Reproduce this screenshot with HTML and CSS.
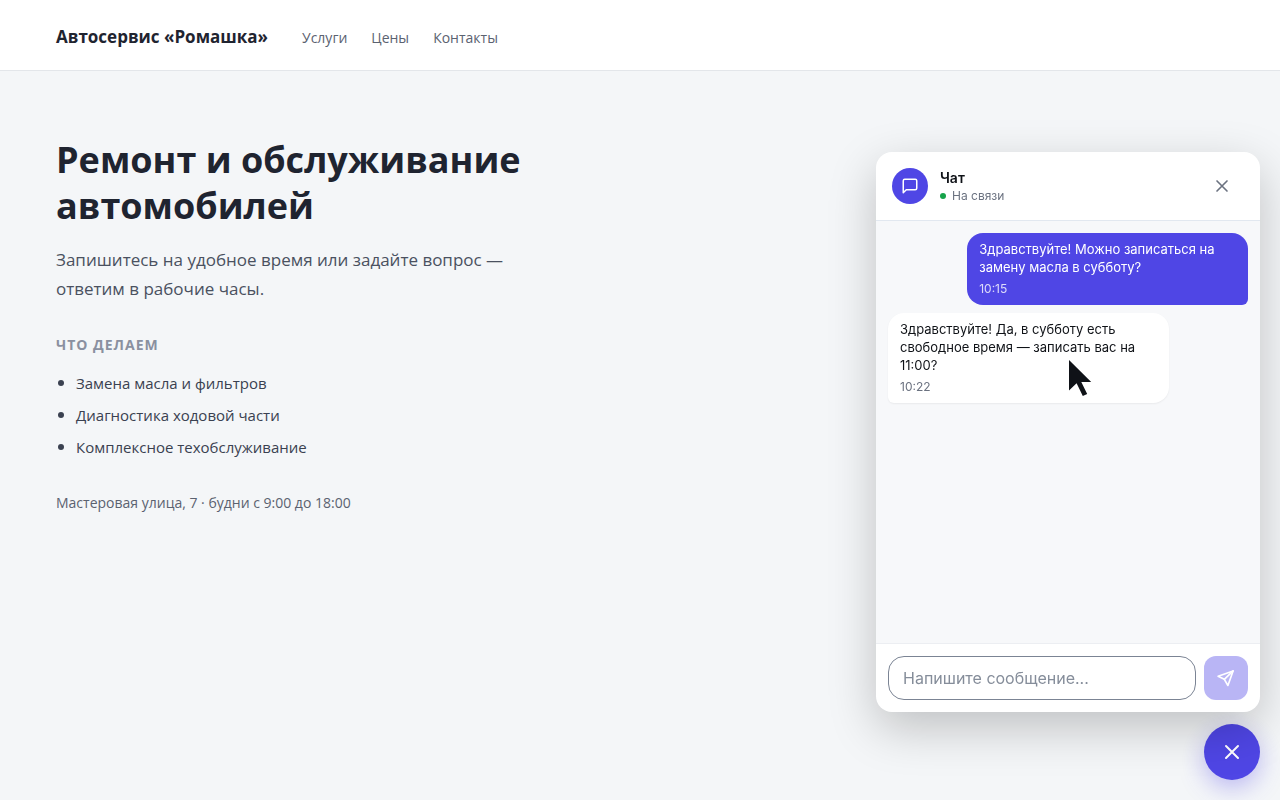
FILE: index.html
```html
<!DOCTYPE html>
<html lang="ru">
<head>
    <meta charset="UTF-8">
    <meta name="viewport" content="width=device-width, initial-scale=1.0">
    <title>Автосервис «Ромашка»</title>
    <link rel="stylesheet" href="styles.css">
</head>
<body>
    <header class="site-header">
        <div class="brand">Автосервис «Ромашка»</div>
        <nav class="site-nav">
            <a href="#services">Услуги</a>
            <a href="#prices">Цены</a>
            <a href="#contacts">Контакты</a>
        </nav>
    </header>

    <main class="content">
        <h1>Ремонт и обслуживание автомобилей</h1>
        <p class="lead">Запишитесь на удобное время или задайте вопрос — ответим в рабочие часы.</p>

        <h2 id="services">Что делаем</h2>
        <ul class="services">
            <li>Замена масла и фильтров</li>
            <li>Диагностика ходовой части</li>
            <li>Комплексное техобслуживание</li>
        </ul>

        <p class="address" id="contacts">Мастеровая улица, 7 · будни с 9:00 до 18:00</p>
    </main>

    <!-- Chat widget -->
    <div class="widget">
        <section class="chat" aria-label="Чат">
            <div class="chat-header">
                <div class="avatar">
                    <svg width="18" height="18" viewBox="0 0 24 24" fill="none" stroke="currentColor" stroke-width="2" stroke-linecap="round" stroke-linejoin="round"><path d="M21 15a2 2 0 0 1-2 2H7l-4 4V5a2 2 0 0 1 2-2h14a2 2 0 0 1 2 2z"/></svg>
                </div>
                <div class="chat-info">
                    <div class="chat-title">Чат</div>
                    <div class="chat-status">На связи</div>
                </div>
                <button type="button" class="chat-close" aria-label="Закрыть чат">
                    <svg width="20" height="20" viewBox="0 0 24 24" fill="none" stroke="currentColor" stroke-width="2" stroke-linecap="round"><path d="M18 6 6 18M6 6l12 12"/></svg>
                </button>
            </div>

            <div class="messages">
                <div class="message outgoing">
                    <p>Здравствуйте! Можно записаться на замену масла в субботу?</p>
                    <time>10:15</time>
                </div>
                <div class="message incoming">
                    <p>Здравствуйте! Да, в субботу есть свободное время — записать вас на 11:00?</p>
                    <time>10:22</time>
                </div>
            </div>

            <form class="composer">
                <input type="text" name="message" placeholder="Напишите сообщение..." aria-label="Сообщение">
                <button type="submit" class="send" aria-label="Отправить" disabled>
                    <svg width="20" height="20" viewBox="0 0 24 24" fill="none" stroke="currentColor" stroke-width="2" stroke-linecap="round" stroke-linejoin="round"><path d="M20.500 3.500 2.500 9.800l7.500 3.800 4.300 7.400z"/><path d="M20.500 3.500 10 13.600"/></svg>
                </button>
            </form>

            <svg class="cursor" width="23" height="38" viewBox="0 0 23 38" aria-hidden="true"><path fill="#0f1217" d="M0 0v30.500l7.600-7.200 6.200 12.800 4.400-2-5.900-12.100h9.900z"/></svg>
        </section>

        <button type="button" class="launcher" aria-label="Свернуть чат">
            <svg width="24" height="24" viewBox="0 0 24 24" fill="none" stroke="currentColor" stroke-width="2" stroke-linecap="round"><path d="M18 6 6 18M6 6l12 12"/></svg>
        </button>
    </div>
</body>
</html>
```
FILE: styles.css
```css
* {
    box-sizing: border-box;
}
body {
    margin: 0;
    font-family: "Open Sans", "Noto Sans", sans-serif;
    color: #1f2430;
    background: #f4f6f8;
}
h1, h2, p, ul {
    margin: 0;
}
button, input {
    font: inherit;
}
svg {
    display: block;
}

.site-header {
    display: flex;
    align-items: baseline;
    gap: 34px;
    padding: 24px 56px 20px;
    background: #fff;
    border-bottom: 1px solid #e3e6ea;
}
.brand {
    font-size: 17px;
    line-height: 26px;
    font-weight: 700;
}
.site-nav {
    display: flex;
    gap: 24px;
}
.site-nav a {
    font-size: 14px;
    line-height: 24px;
    color: #5b6270;
    text-decoration: none;
}

.content {
    max-width: 592px;
    padding: 66px 56px;
}
h1 {
    font-size: 36px;
    line-height: 46px;
    font-weight: 700;
    margin-bottom: 16px;
}
.lead {
    font-size: 17px;
    line-height: 29px;
    color: #4a5160;
    margin-bottom: 32px;
}
h2 {
    font-size: 14px;
    line-height: 20px;
    letter-spacing: 1px;
    text-transform: uppercase;
    color: #8a90a0;
    margin-bottom: 12px;
}
.services {
    padding: 0 0 0 2px;
    list-style: none;
    font-size: 15px;
    line-height: 32px;
    color: #3a4150;
    margin-bottom: 28px;
}
.services li {
    display: flex;
    align-items: center;
    gap: 12px;
}
.services li::before {
    content: "";
    width: 6px;
    height: 6px;
    border-radius: 50%;
    background: #3a4150;
}
.address {
    font-size: 14px;
    line-height: 24px;
    color: #5b6270;
}

.widget {
    position: fixed;
    right: 20px;
    bottom: 20px;
    display: flex;
    flex-direction: column;
    align-items: flex-end;
    gap: 12px;
    font-family: Inter, sans-serif;
}
.chat {
    position: relative;
    display: flex;
    flex-direction: column;
    width: min(384px, calc(100vw - 40px));
    height: min(560px, calc(100vh - 108px));
    background: #fff;
    border-radius: 16px;
    box-shadow: 0 16px 48px rgba(0, 0, 0, 0.22);
}
.chat-header {
    display: flex;
    align-items: center;
    gap: 12px;
    padding: 12px 16px;
    border-bottom: 1px solid #e2e8f0;
}
.avatar {
    display: flex;
    align-items: center;
    justify-content: center;
    width: 36px;
    height: 36px;
    border-radius: 50%;
    color: #fff;
    background: #4f46e5;
}
.chat-info {
    flex: 1;
}
.chat-title {
    font-size: 14px;
    line-height: 20px;
    font-weight: 600;
    color: #0f1217;
}
.chat-status {
    display: flex;
    align-items: center;
    gap: 6px;
    font-size: 12px;
    line-height: 16px;
    color: #6b7280;
}
.chat-status::before {
    content: "";
    width: 6px;
    height: 6px;
    border-radius: 50%;
    background: #16a34a;
}
.chat-close {
    display: flex;
    align-items: center;
    justify-content: center;
    width: 44px;
    height: 44px;
    padding: 0;
    border: none;
    color: #6b7280;
    background: none;
    cursor: pointer;
}

.messages {
    flex: 1;
    display: flex;
    flex-direction: column;
    gap: 8px;
    padding: 12px;
    overflow-y: auto;
    background: #f7f8fa;
}
.message {
    width: 78%;
    padding: 7px 12px 8px;
    border-radius: 16px;
    font-size: 13px;
    line-height: 18px;
}
.message time {
    display: block;
    margin-top: 4px;
    font-size: 12px;
    line-height: 17px;
}
.outgoing {
    align-self: flex-end;
    border-bottom-right-radius: 6px;
    color: #fff;
    background: #4f46e5;
}
.outgoing time {
    color: rgba(255, 255, 255, 0.8);
}
.incoming {
    align-self: flex-start;
    border-bottom-left-radius: 6px;
    color: #0f1217;
    background: #fff;
    box-shadow: 0 1px 2px rgba(0, 0, 0, 0.06);
}
.incoming time {
    color: #6b7280;
}

.composer {
    display: flex;
    gap: 8px;
    padding: 12px;
    border-top: 1px solid #eceef2;
}
.composer input {
    flex: 1;
    min-width: 0;
    height: 44px;
    padding: 0 14px;
    border: 1px solid #7b8494;
    border-radius: 16px;
    font-size: 16px;
    background: #fff;
}
.composer input::placeholder {
    color: #858d9a;
}
.send {
    display: flex;
    align-items: center;
    justify-content: center;
    width: 44px;
    height: 44px;
    padding: 0;
    border: none;
    border-radius: 12px;
    color: #fff;
    background: #b9b5f5;
}
.cursor {
    position: absolute;
    left: 193px;
    top: 208px;
}

.launcher {
    display: flex;
    align-items: center;
    justify-content: center;
    width: 56px;
    height: 56px;
    padding: 0;
    border: none;
    border-radius: 50%;
    color: #fff;
    background: #4f46e5;
    box-shadow: 0 8px 24px rgba(79, 70, 229, 0.35);
    cursor: pointer;
}
```
